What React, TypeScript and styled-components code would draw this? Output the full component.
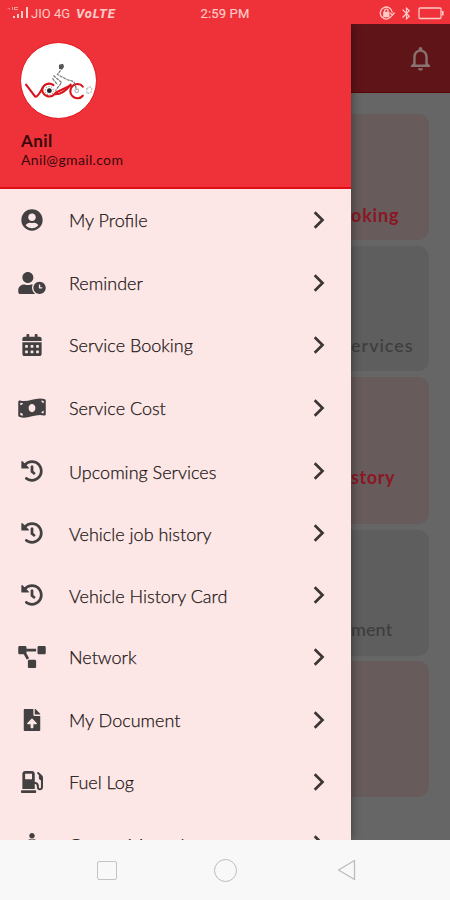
import React from 'react';
import styled, { createGlobalStyle } from 'styled-components';
import {
  FaUserCircle,
  FaUserClock,
  FaCalendarAlt,
  FaMoneyBillWave,
  FaHistory,
  FaProjectDiagram,
  FaFileUpload,
  FaGasPump,
  FaMale,
} from 'react-icons/fa';
import { MdNotificationsNone, MdBluetooth } from 'react-icons/md';

const GlobalStyle = createGlobalStyle`
  * { box-sizing: border-box; }
  body { margin: 0; background: #666; font-family: Lato, sans-serif; }
`;

const Phone = styled.div`
  width: 450px;
  height: 900px;
  display: flex;
  flex-direction: column;
  overflow: hidden;
`;

const StatusBar = styled.header`
  height: 24px;
  flex: none;
  display: grid;
  grid-template-columns: 1fr auto 1fr;
  align-items: center;
  padding: 2px 6px 0 6px;
  background: #ef3239;
  color: #ffc9c6;
  font: 13px Roboto, sans-serif;
`;

const StatusGroup = styled.div<{ $end?: boolean }>`
  display: flex;
  align-items: center;
  justify-content: ${(p) => (p.$end ? 'flex-end' : 'flex-start')};
  gap: ${(p) => (p.$end ? 4 : 0)}px;
  white-space: nowrap;
`;

const Clock = styled.span`
  letter-spacing: 0.15px;
  -webkit-text-stroke: 0.2px #ffc9c6;
`;

const Carrier = styled.span`
  margin-left: 1px;
  letter-spacing: 0;
`;

const Volte = styled.b`
  margin-left: 6px;
  font-style: italic;
  font-weight: 800;
  letter-spacing: 0.8px;
`;

const Stage = styled.main`
  flex: 1;
  min-height: 0;
  display: grid;
  grid-template-columns: 351px 99px;
  overflow: hidden;
`;

const Drawer = styled.aside`
  min-height: 0;
  background: #fde7e6;
  box-shadow: 0 0 10px rgba(0, 0, 0, 0.45);
  z-index: 1;
`;

const Account = styled.section`
  height: 165px;
  padding: 18px 20px 0;
  background: #ef3239;
  border-bottom: 2px solid #e20e17;
  color: #3a080c;
`;

const Avatar = styled.div`
  width: 77px;
  height: 77px;
  border-radius: 50%;
  background: #fff;
  border: 1px solid #e5141c;
  overflow: hidden;
`;

const AccountName = styled.div`
  margin: 12px 0 0 1px;
  font: 700 17px/20px Lato, sans-serif;
  letter-spacing: 0.4px;
`;

const AccountMail = styled.div`
  margin-left: 1px;
  font: 14px/17px Lato, sans-serif;
  letter-spacing: 0.35px;
`;

const Menu = styled.nav`
  display: flex;
  flex-direction: column;
`;

const MenuRow = styled.a<{ $height: number }>`
  flex: none;
  height: ${(p) => p.$height}px;
  display: grid;
  grid-template-columns: 64px 1fr 64px;
  align-items: center;
  color: #424040;
`;

const MenuIcon = styled.span<{ $wide?: boolean }>`
  display: flex;
  justify-content: center;
  svg {
    height: 22px;
    width: ${(p) => (p.$wide ? '28px' : 'auto')};
    flex: none;
  }
`;

const MenuLabel = styled.span<{ $drop?: number; $spacing?: number }>`
  padding: ${(p) => p.$drop ?? 0}px 0 0 5px;
  font-size: 18px;
  font-weight: 300;
  line-height: 22px;
  color: #1d1717;
  -webkit-text-stroke: 0.25px #1d1717;
  white-space: nowrap;
  letter-spacing: ${(p) => p.$spacing ?? 0}px;
`;

const Page = styled.section`
  min-width: 0;
  min-height: 0;
  overflow: hidden;
  background: #666;
`;

const AppBar = styled.div`
  height: 69px;
  display: flex;
  align-items: center;
  justify-content: flex-end;
  padding: 0 15px 0 0;
  background: #5f1418;
  border-bottom: 1px solid #5b0207;
  color: #8a7270;
`;

const CardList = styled.div`
  padding: 21px 21px 0 0;
  display: flex;
  flex-direction: column;
`;

const Card = styled.article<{ $tone: 'rose' | 'grey'; $height: number; $gap: number; $lift: number }>`
  height: ${(p) => p.$height}px;
  margin-bottom: ${(p) => p.$gap}px;
  padding-bottom: ${(p) => p.$lift}px;
  display: flex;
  align-items: flex-end;
  border-radius: 0 11px 11px 0;
  background: ${(p) => (p.$tone === 'rose' ? '#675b5b' : '#5e5e5e')};
  color: ${(p) => (p.$tone === 'rose' ? '#8b1725' : '#3d3d3d')};
`;

const CardTitle = styled.span<{ $bold?: boolean; $spacing: number }>`
  font: ${(p) => (p.$bold ? 700 : 500)} 18px/24px Lato, sans-serif;
  letter-spacing: ${(p) => p.$spacing}px;
`;

const SystemNav = styled.footer`
  height: 60px;
  flex: none;
  display: grid;
  grid-template-columns: 97px 20px 97px 24px 98px 22px;
  align-items: center;
  background: #f8f8f8;
  svg { grid-row: 1; }
`;

const HomeSquare = styled.span`
  grid-column: 2;
  width: 20px;
  height: 19px;
  border: 1.5px solid #c3c3c3;
  border-radius: 2px;
`;

const HomeCircle = styled.span`
  grid-column: 4;
  width: 23px;
  height: 23px;
  border: 1px solid #bcbcbc;
  border-radius: 50%;
`;

const BackArrow = styled.svg`
  grid-column: 6;
`;

const Signal = () => (
  <svg width="24" height="14" viewBox="0 0 24 14" fill="currentColor">
    <path d="M1 2l3 2v-2z" opacity=".5" />
    <path d="M6 1h1v3h-1zM8 1h4v1h-3v1h3v1h-4z" opacity=".7" />
    <path d="M7 10h2v2h-2zM11 8h2v4h-2zM15 5h2v7h-2zM20 1h2v11h-2z" />
  </svg>
);

const RotationLock = () => (
  <svg width="16" height="15" viewBox="0 0 16 15" fill="none" stroke="currentColor" strokeWidth="1.3">
    <path d="M12.8 9.5A6 6 0 1 1 13.3 6.5M11 7l2.5 2L15.5 6.5" />
    <path d="M5.5 6.5v-1.5a1.8 1.8 0 0 1 3.6 0v1.5" />
    <path d="M4.8 6.5h5v4h-5z" fill="currentColor" />
  </svg>
);

const Battery = () => (
  <svg width="26" height="13" viewBox="0 0 26 13" fill="none" stroke="currentColor" strokeWidth="1.3">
    <rect x="1" y="1" width="22" height="10.5" rx="1" />
    <path d="M24.8 4v4.5" strokeWidth="1.6" />
  </svg>
);

const Logo = () => (
  <svg width="75" height="75" viewBox="0 0 74 74" fill="none">
    <g stroke="#d9141d" strokeWidth="2.1" strokeLinecap="round" strokeLinejoin="round">
      <path d="M5 41l9 12c3 0 5-5 7-8a7.2 7.2 0 0 1 11-3.500" />
      <path d="M21 45a7 7 0 0 0 12 5.500C40 51 46 45 49 41" />
      <path d="M61 43a7 7 0 1 0 0 9" />
      <path d="M34 49l15-7" />
    </g>
    <circle cx="28" cy="47" r="2.4" fill="#222" />
    <circle cx="28" cy="47" r="4" stroke="#888" strokeDasharray="1 1.5" />
    <path d="M37.500 21.500l4-1 1 3-2 3-3-1z" fill="#555" />
    <path d="M39 27l-3 4 9 5 7 2 3 8M32 32l8 7-6 8M31 35l5 6" stroke="#777" strokeWidth="1.2" strokeDasharray="3 .8" />
    <circle cx="55" cy="47" r="1.8" stroke="#aaa" />
    <path d="M65 45l3-2 2 2-1 4-4 1z" stroke="#aaa" strokeDasharray="2 1" />
  </svg>
);

const Chevron = () => (
  <svg width="64" height="22" viewBox="0 0 64 22" fill="none" stroke="#3b3535" strokeWidth="2.7">
    <path d="M27.7 3.3L35.5 11l-7.800 7.700" />
  </svg>
);

const entries = [
  { label: 'My Profile', icon: FaUserCircle, height: 62 },
  { label: 'Reminder', icon: FaUserClock, height: 63, wide: true },
  { label: 'Service Booking', icon: FaCalendarAlt, height: 62 },
  { label: 'Service Cost', icon: FaMoneyBillWave, height: 63, wide: true },
  { label: 'Upcoming Services', icon: FaHistory, height: 63, drop: 2 },
  { label: 'Vehicle job history', icon: FaHistory, height: 62, drop: 2 },
  { label: 'Vehicle History Card', icon: FaHistory, height: 62, drop: 2 },
  { label: 'Network', icon: FaProjectDiagram, height: 62, wide: true },
  { label: 'My Document', icon: FaFileUpload, height: 63 },
  { label: 'Fuel Log', icon: FaGasPump, height: 62 },
  { label: 'Owner Manual', icon: FaMale, height: 62, drop: 1 },
];

export default function App() {
  return (
    <Phone>
      <GlobalStyle />
      <StatusBar>
        <StatusGroup>
          <Signal />
          <Carrier>JIO 4G</Carrier>
          <Volte>VoLTE</Volte>
        </StatusGroup>
        <Clock>2:59 PM</Clock>
        <StatusGroup $end>
          <RotationLock />
          <MdBluetooth size={15} />
          <Battery />
        </StatusGroup>
      </StatusBar>
      <Stage>
        <Drawer>
          <Account>
            <Avatar><Logo /></Avatar>
            <AccountName>Anil</AccountName>
            <AccountMail>Anil@gmail.com</AccountMail>
          </Account>
          <Menu>
            {entries.map(({ label, icon: Icon, height, wide, drop }) => (
              <MenuRow key={label} $height={height}>
                <MenuIcon $wide={wide}><Icon /></MenuIcon>
                <MenuLabel $drop={drop}>{label}</MenuLabel>
                <Chevron />
              </MenuRow>
            ))}
          </Menu>
        </Drawer>
        <Page>
          <AppBar><MdNotificationsNone size={29} /></AppBar>
          <CardList>
            <Card $tone="rose" $height={126} $gap={6} $lift={13}><CardTitle $bold $spacing={0.8}>oking</CardTitle></Card>
            <Card $tone="grey" $height={125} $gap={6} $lift={14}><CardTitle $spacing={1}>ervices</CardTitle></Card>
            <Card $tone="rose" $height={147} $gap={6} $lift={35}><CardTitle $bold $spacing={0.6}>story</CardTitle></Card>
            <Card $tone="grey" $height={126} $gap={5} $lift={15}><CardTitle $spacing={0.1}>ment</CardTitle></Card>
            <Card $tone="rose" $height={136} $gap={0} $lift={0} />
          </CardList>
        </Page>
      </Stage>
      <SystemNav>
        <HomeSquare />
        <HomeCircle />
        <BackArrow width="22" height="24" viewBox="0 0 22 24" fill="none" stroke="#bcbcbc" strokeWidth="1.3">
          <path d="M18.5 2.5v19L2.5 12z" strokeLinejoin="round" />
        </BackArrow>
      </SystemNav>
    </Phone>
  );
}
